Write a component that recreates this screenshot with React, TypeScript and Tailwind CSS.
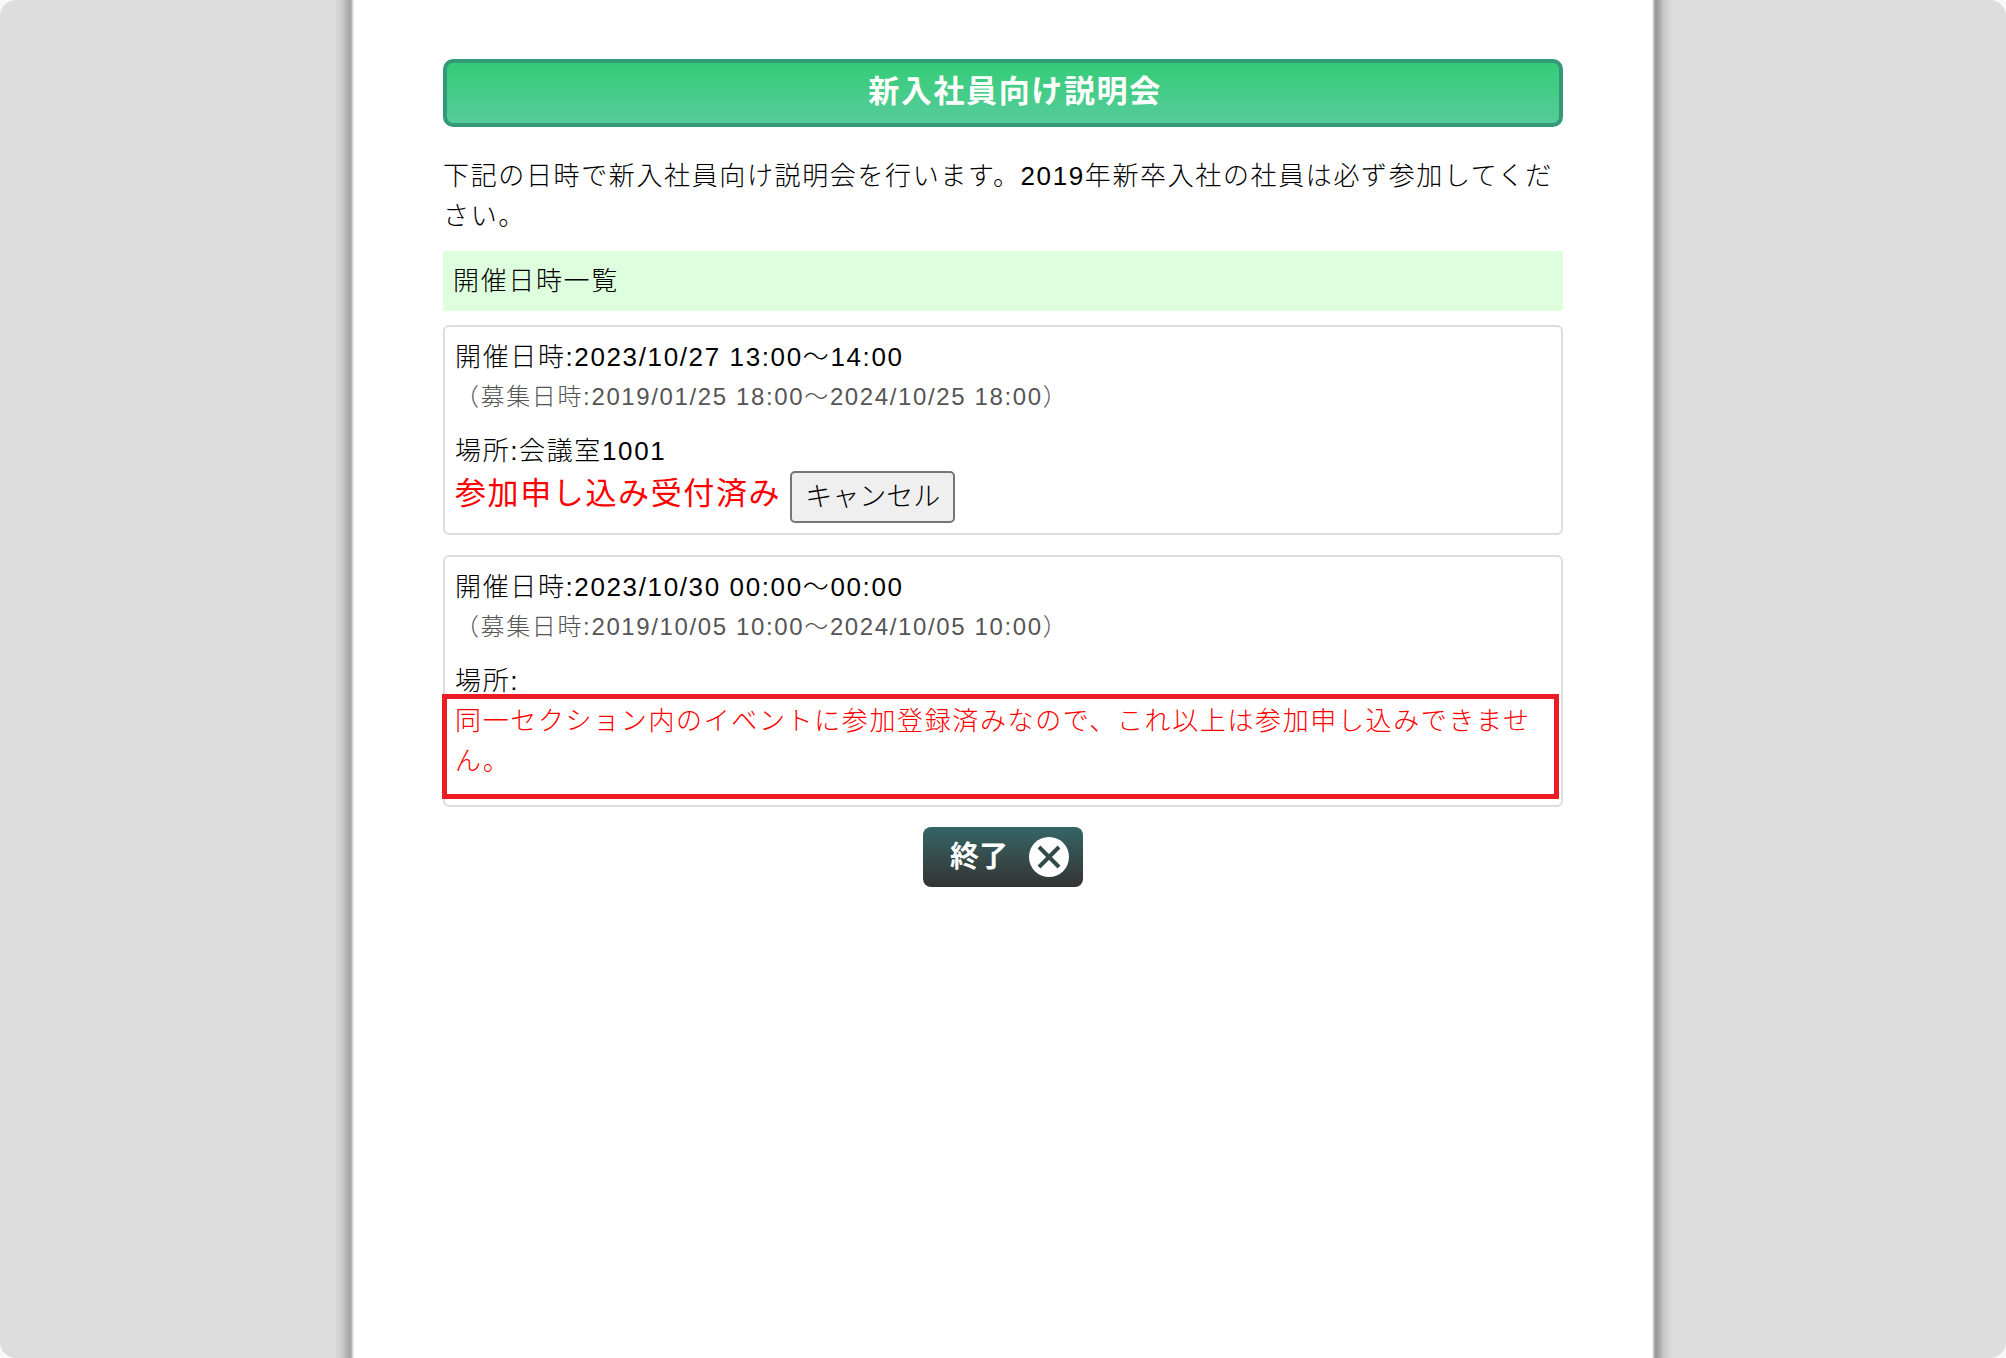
import React from "react";

type EventItem = {
  date: string;
  period: string;
  place: string;
  joined?: boolean;
  error?: string;
};

const events: EventItem[] = [
  {
    date: "2023/10/27 13:00～14:00",
    period: "2019/01/25 18:00～2024/10/25 18:00",
    place: "会議室1001",
    joined: true,
  },
  {
    date: "2023/10/30 00:00～00:00",
    period: "2019/10/05 10:00～2024/10/05 10:00",
    place: "",
    error:
      "同一セクション内のイベントに参加登録済みなので、これ以上は参加申し込みできません。",
  },
];

const EventCard = ({ event }: { event: EventItem }) => {
  return (
    <li className="relative rounded-md border-2 border-[#dddddd] p-[10px]">
      <p>開催日時:{event.date}</p>
      <p className="text-2xl leading-[40px] text-[#555555]">
        （募集日時:{event.period}）
      </p>
      <p className="mt-[14px]">場所:{event.place}</p>
      {event.joined && (
        <div className="flex items-start gap-[9px]">
          <span className="text-[31px] leading-[46px] font-normal text-[#ff0000]">
            参加申し込み受付済み
          </span>
          <button
            type="button"
            className="h-[52px] cursor-pointer rounded-[5px] border-2 border-[#767676] bg-[#efefef] px-[13px] text-[27px] leading-[46px] tracking-normal"
          >
            キャンセル
          </button>
        </div>
      )}
      {event.error && (
        <>
          <p className="mb-[14px] text-[#ff0000]">{event.error}</p>
          {/* highlight frame around the error */}
          <div className="pointer-events-none absolute -left-[3px] right-[2px] bottom-[6px] h-[105px] border-5 border-[#ed1c24]" />
        </>
      )}
    </li>
  );
};

const CloseIcon = () => {
  return (
    <svg width="40" height="40" viewBox="0 0 40 40" aria-hidden="true">
      <circle cx="20" cy="20" r="20" fill="#fff" />
      <path d="M10 10 L30 30 M30 10 L10 30" stroke="#314b4b" strokeWidth="4" />
    </svg>
  );
};

const App = () => {
  return (
    <div className="min-h-screen bg-[#f8f8f8]">
      <div className="flex min-h-screen justify-center overflow-hidden rounded-2xl bg-[#dddddd]">
        <div className="w-5 shrink-0 bg-[linear-gradient(to_left,#ffffff,#a6a6a6_3px,#a8a8a8_5px,#cccccc_12px,#dddddd)]" />
        <main className="w-full max-w-[1298px] bg-white px-[89px] pt-[59px] font-['Liberation_Sans','Noto_Sans_CJK_JP',sans-serif] text-[26px] leading-[40px] font-light tracking-[0.0625em] text-black">
          <h1 className="h-[68px] rounded-[10px] border-4 border-[#339977] bg-linear-to-b from-[#33cc77] to-[#55cc99] pl-6 text-center text-[31px] leading-[58px] font-bold text-white">
            新入社員向け説明会
          </h1>
          <p className="mt-[29px]">
            下記の日時で新入社員向け説明会を行います。2019年新卒入社の社員は必ず参加してください。
          </p>
          <h2 className="mt-[15px] bg-[#ddffdd] p-[10px] font-light">
            開催日時一覧
          </h2>
          <ul className="mt-[14px] flex flex-col gap-5">
            {events.map((event) => (
              <EventCard key={event.date} event={event} />
            ))}
          </ul>
          <div className="mt-5 flex justify-center">
            <button
              type="button"
              className="flex h-[60px] w-[160px] cursor-pointer items-center justify-between rounded-lg bg-linear-to-b from-[#336666] to-[#333333] pr-[14px] pl-[27px] text-[29px] font-bold tracking-normal text-white"
            >
              終了
              <CloseIcon />
            </button>
          </div>
        </main>
        <div className="w-5 shrink-0 bg-[linear-gradient(to_right,#ffffff,#999999_3px,#9c9c9c_5px,#c8c8c8_12px,#dddddd)]" />
      </div>
    </div>
  );
};

export default App;
